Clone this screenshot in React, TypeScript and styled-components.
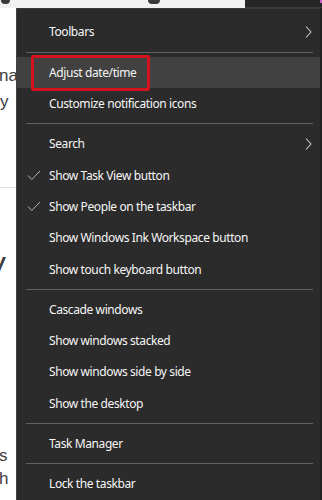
import React from 'react';
import styled, { createGlobalStyle } from 'styled-components';

const GlobalStyle = createGlobalStyle`
    html, body {
        margin: 0;
        padding: 0;
        background: #ffffff;
        overflow: hidden;
    }
`;

const Screen = styled.div`
    width: 322px;
    height: 500px;
    display: grid;
    grid-template-rows: 8px 1fr;
    grid-template-columns: 16px 1fr 2px;
    overflow: hidden;
`;

const TopStrip = styled.div`
    grid-column: 1 / 4;
    display: flex;
    background: #f1f1f1;
`;

const TopPage = styled.div`
    flex: 1;
    display: flex;
    align-items: flex-start;
    gap: 138px;
    padding-left: 1px;
`;

const CutIcon = styled.div<{ $w: number }>`
    width: ${(p) => p.$w}px;
    height: 4px;
    background: #3a3a3a;
    border-radius: 0 0 ${(p) => p.$w / 2}px ${(p) => p.$w / 2}px;
`;

const TopTaskbar = styled.div`
    width: 77px;
    background: #262626;
    border-bottom: 1px solid #3a3a3a;
    display: flex;
    justify-content: flex-end;
`;

const PinkDot = styled.div`
    width: 2px;
    height: 3px;
    background: #c85fc8;
`;

const PageEdge = styled.div`
    display: flex;
    flex-direction: column;
    overflow: hidden;
    font-family: "Liberation Sans", Arial, sans-serif;
    color: #3c3c3c;
    background: #ffffff;
`;

const Fragment = styled.div<{ $top: number; $size: number; $shift: number }>`
    margin-top: ${(p) => p.$top}px;
    margin-left: ${(p) => p.$shift}px;
    font-size: ${(p) => p.$size}px;
    line-height: 1;
    white-space: nowrap;
`;

const Rule = styled.div<{ $top: number }>`
    margin-top: ${(p) => p.$top}px;
    height: 1px;
    background: #e2e2e2;
`;

const Menu = styled.div`
    background: #2b2b2b;
    border-left: 1px solid #444444;
    border-top: 1px solid #3a3a3a;
    padding-top: 7.35px;
    font-family: "Noto Sans", "Open Sans", sans-serif;
    font-size: 12px;
    letter-spacing: -0.4px;
    color: #f6f6f6;
    display: flex;
    flex-direction: column;
`;

const RightEdge = styled.div`
    background: #222222;
`;

const Item = styled.div<{ $hover?: boolean }>`
    height: 31.3px;
    display: flex;
    align-items: center;
    background: ${(p) => (p.$hover ? '#414141' : 'transparent')};
`;

const CheckCell = styled.div`
    width: 32px;
    display: flex;
    padding-left: 10px;
    box-sizing: border-box;
`;

const Label = styled.span<{ $boxed?: boolean }>`
    position: relative;
    white-space: nowrap;

    ${(p) => p.$boxed && `
        &::after {
            content: '';
            position: absolute;
            left: -18px;
            right: -14px;
            top: -9px;
            bottom: -10px;
            border: 3px solid #d2121c;
            border-radius: 2px;
        }
    `}
`;

const Chevron = styled.svg`
    margin-left: auto;
    margin-right: 8px;
`;

const Separator = styled.div`
    height: 1px;
    margin: 4px 7px 4px 9px;
    background: #626262;
`;

type Entry = { label: string; check?: boolean; sub?: boolean; hover?: boolean; boxed?: boolean } | 'sep';

const entries: Entry[] = [
    { label: 'Toolbars', sub: true },
    'sep',
    { label: 'Adjust date/time', hover: true, boxed: true },
    { label: 'Customize notification icons' },
    'sep',
    { label: 'Search', sub: true },
    { label: 'Show Task View button', check: true },
    { label: 'Show People on the taskbar', check: true },
    { label: 'Show Windows Ink Workspace button' },
    { label: 'Show touch keyboard button' },
    'sep',
    { label: 'Cascade windows' },
    { label: 'Show windows stacked' },
    { label: 'Show windows side by side' },
    { label: 'Show the desktop' },
    'sep',
    { label: 'Task Manager' },
    'sep',
    { label: 'Lock the taskbar' },
];

function CheckMark() {
    return (
        <svg width="14" height="11" viewBox="0 0 14 11">
            <path d="M1 5.5 L4.8 9.5 L13 1" fill="none" stroke="#b8b8b8" strokeWidth="1" />
        </svg>
    );
}

export default function App() {
    return (
        <>
            <GlobalStyle />
            <Screen>
                <TopStrip>
                    <TopPage>
                        <CutIcon $w={9} />
                        <CutIcon $w={12} />
                    </TopPage>
                    <TopTaskbar>
                        <PinkDot />
                    </TopTaskbar>
                </TopStrip>
                <PageEdge>
                    <Fragment $top={59} $size={17} $shift={-1}>na</Fragment>
                    <Fragment $top={9} $size={17} $shift={0}>y</Fragment>
                    <Rule $top={77} />
                    <Fragment $top={64} $size={30} $shift={-14}>V</Fragment>
                    <Fragment $top={165} $size={17} $shift={-1}>s</Fragment>
                    <Fragment $top={6} $size={17} $shift={-1}>h</Fragment>
                </PageEdge>
                <Menu>
                    {entries.map((entry, index) => {
                        if (entry === 'sep') {
                            return <Separator key={index} />;
                        }
                        return (
                            <Item key={index} $hover={entry.hover}>
                                <CheckCell>{entry.check && <CheckMark />}</CheckCell>
                                <Label $boxed={entry.boxed}>{entry.label}</Label>
                                {entry.sub &&
                                <Chevron width="7" height="12" viewBox="0 0 7 12">
                                    <path d="M1 0.5 L6 6 L1 11.5" fill="none" stroke="#c4c4c4" strokeWidth="1.1" />
                                </Chevron>
                                }
                            </Item>
                        );
                    })}
                </Menu>
                <RightEdge />
            </Screen>
        </>
    );
}
